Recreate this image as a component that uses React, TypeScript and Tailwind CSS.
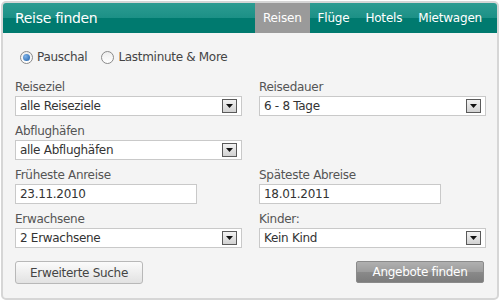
import React from "react";

const font = { fontFamily: '"DejaVu Sans", Verdana, sans-serif' };

function Arrow() {
  return (
    <span className="absolute right-[4px] top-[2px] flex h-[14px] w-[15px] items-center justify-center border border-[#5a5a5a] bg-[linear-gradient(#f2f2f2,#d2d2d2)]">
      <svg width="7" height="4" viewBox="0 0 7 4">
        <path d="M0 0h7L3.5 4z" fill="#111" />
      </svg>
    </span>
  );
}

function Select({ value }: { value: string }) {
  return (
    <div className="relative h-[20px] w-[227px] border border-[#c9c9c9] bg-white pl-[4px] text-[12px] leading-[18px] tracking-[-0.3px] text-[#333]">
      {value}
      <Arrow />
    </div>
  );
}

function Input({ value }: { value: string }) {
  return (
    <div className="h-[20px] w-[182px] border border-[#c9c9c9] bg-white pl-[4px] text-[12px] leading-[18px] tracking-[-0.3px] text-[#333]">
      {value}
    </div>
  );
}

function Field({ label, children }: { label: string; children: React.ReactNode }) {
  return (
    <div className="flex flex-col">
      <div className="h-[16px] text-[12px] leading-[15px] tracking-[-0.3px] text-[#555]">{label}</div>
      {children}
    </div>
  );
}

function Radio({ checked, label }: { checked?: boolean; label: string }) {
  return (
    <label className="flex items-center gap-[4px] text-[12px] tracking-[-0.3px] text-[#444]">
      <span className="flex h-[13px] w-[13px] items-center justify-center rounded-full border border-[#8a8a8a] bg-[linear-gradient(#ededed,#ffffff)]">
        {checked && (
          <span className="h-[7px] w-[7px] rounded-full bg-[radial-gradient(circle_at_35%_35%,#7fb2e8,#1d5fa8)]" />
        )}
      </span>
      {label}
    </label>
  );
}

export default function App() {
  return (
    <div className="h-[301px] w-[500px] bg-white p-px" style={font}>
      <div className="flex h-full flex-col overflow-hidden rounded-[5px] border-2 border-[#d6d6d6] bg-[#f4f4f4]">
        {/* header */}
        <div className="flex h-[30px] items-stretch justify-between bg-[linear-gradient(#2d9c92_0%,#1c9086_50%,#007a6f_50%,#007a6f_100%)] pr-[7px]">
          <div className="pl-[12px] text-[14px] leading-[30px] tracking-[-0.3px] text-white">Reise finden</div>
          <div className="flex text-[12px] leading-[30px] tracking-[-0.2px] text-white">
            <span className="bg-[#9a9a9a] px-[8px]">Reisen</span>
            <span className="px-[8px]">Flüge</span>
            <span className="px-[8px]">Hotels</span>
            <span className="px-[8px]">Mietwagen</span>
          </div>
        </div>

        {/* body */}
        <div className="flex flex-col px-[12px] pt-[15px]">
          <div className="flex gap-[14px] pl-[5px]">
            <Radio checked label="Pauschal" />
            <Radio label="Lastminute & More" />
          </div>

          <div className="mt-[14px] grid grid-cols-[227px_227px] gap-x-[17px] gap-y-[8px]">
            <Field label="Reiseziel">
              <Select value="alle Reiseziele" />
            </Field>
            <Field label="Reisedauer">
              <Select value="6 - 8 Tage" />
            </Field>
            <Field label="Abflughäfen">
              <Select value="alle Abflughäfen" />
            </Field>
            <div />
            <Field label="Früheste Anreise">
              <Input value="23.11.2010" />
            </Field>
            <Field label="Späteste Abreise">
              <Input value="18.01.2011" />
            </Field>
            <Field label="Erwachsene">
              <Select value="2 Erwachsene" />
            </Field>
            <Field label="Kinder:">
              <Select value="Kein Kind" />
            </Field>
          </div>

          <div className="mt-[13px] flex justify-between pr-[1px]">
            <button className="h-[23px] w-[128px] rounded-[3px] border border-[#b8b8b8] bg-[linear-gradient(#fbfbfb,#e2e2e2)] text-[12px] tracking-[-0.3px] text-[#444]">
              Erweiterte Suche
            </button>
            <button className="h-[22px] w-[128px] rounded-[2px] border border-[#8a8a8a] bg-[linear-gradient(#b0b0b0_0%,#9c9c9c_50%,#8a8a8a_50%,#7c7c7c_100%)] text-[12px] tracking-[-0.3px] text-white">
              Angebote finden
            </button>
          </div>
        </div>
      </div>
    </div>
  );
}
